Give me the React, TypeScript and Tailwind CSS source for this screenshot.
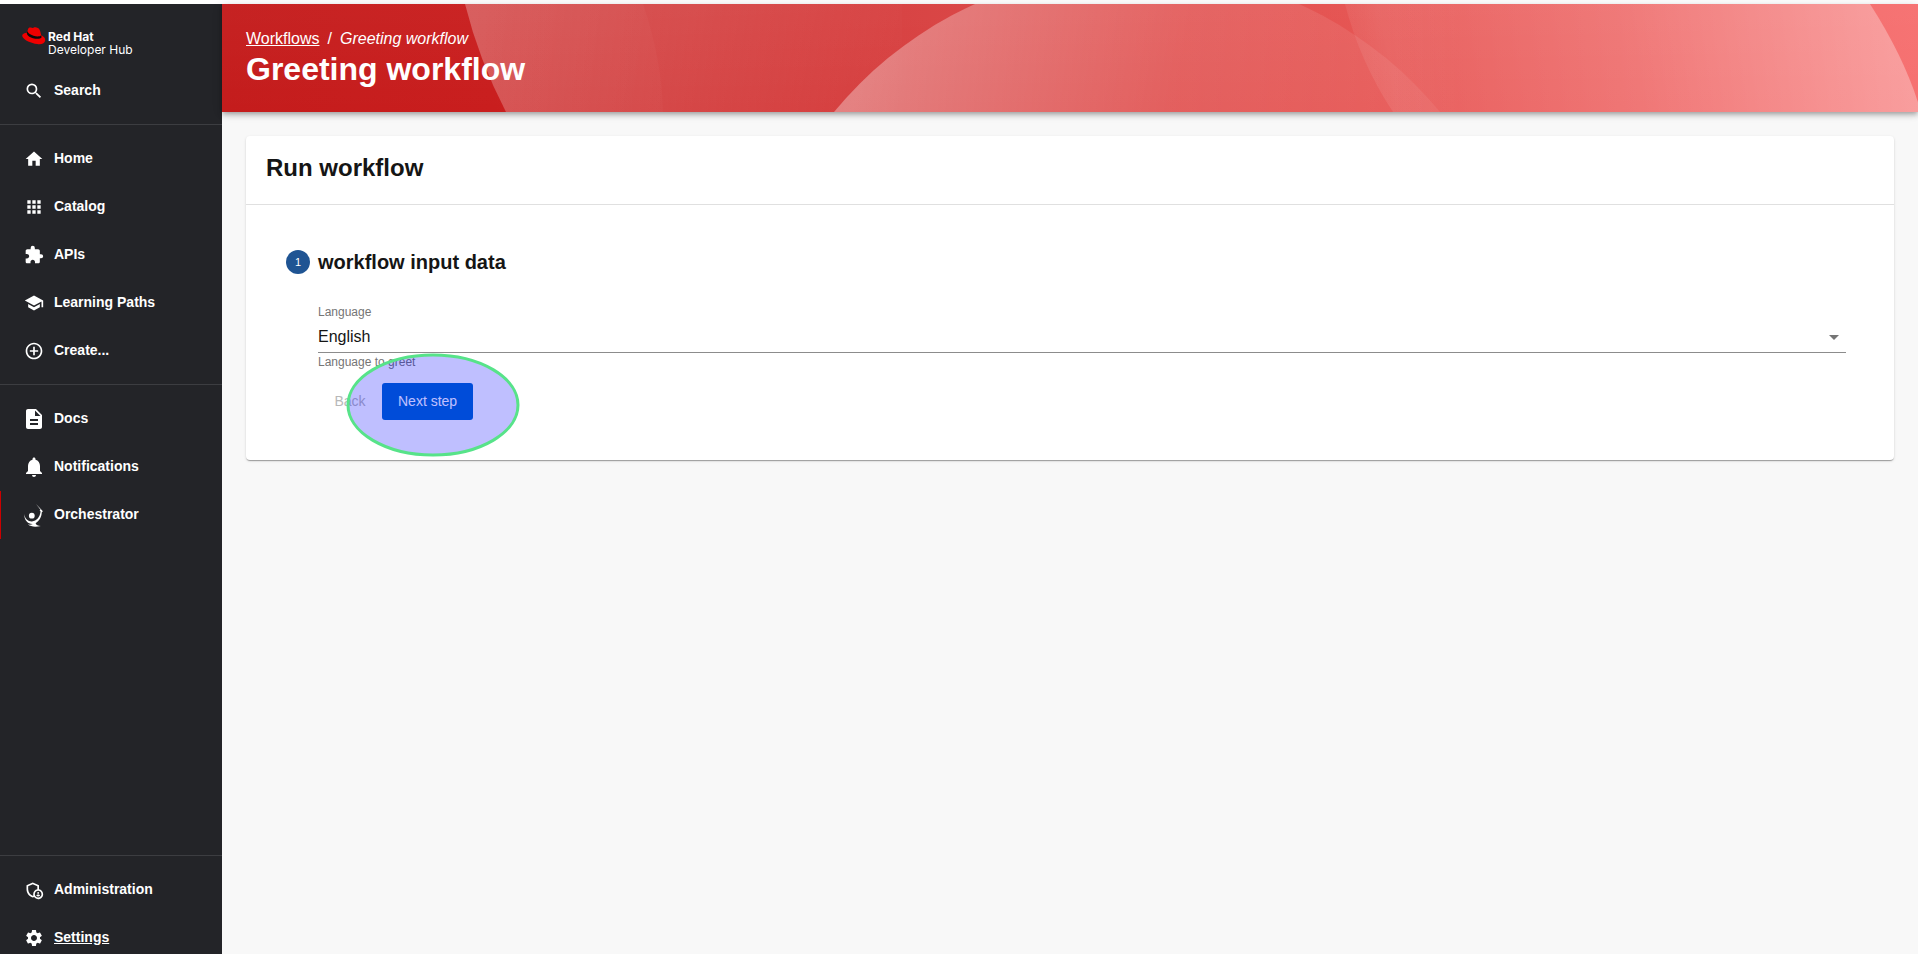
import type { ReactNode } from "react";
import {
  MdAddCircleOutline,
  MdApps,
  MdDescription,
  MdExtension,
  MdHome,
  MdNotifications,
  MdOutlineAdminPanelSettings,
  MdSchool,
  MdSearch,
  MdSettings,
} from "react-icons/md";

function OrchestratorIcon() {
  return (
    <svg viewBox="0 0 24 24" width="24" height="24" fill="currentColor" aria-hidden="true">
      <circle cx="9.8" cy="12.7" r="2.9" />
      <path d="M2.2 11C3 16 6.2 18.6 10 18.4C14.6 18 17.8 14.500 18.600 8.600L17.600 7.600L18.500 6.800L14 1L20.900 8.200L19.800 9.200C19.600 14.200 17.200 18 13.600 20.200C14.200 22 16 22.900 18.800 22.900C13.800 24.200 9 23.900 6 21.600C8.200 22 9.800 21.600 10.800 20.900C6 21.200 2.300 17.500 2.200 11Z" />
    </svg>
  );
}

function Logo() {
  return (
    <a href="#home" className="flex items-start gap-[3px] pl-[22px] pt-[22px] text-white">
      <svg viewBox="0 0 24 18" width="24" height="18" className="mt-px" aria-hidden="true">
        <path
          d="M6 2.200C6.400 .900 7.400 .300 8.800 .600C9.800 .900 10.700 1.200 11.400 .800C12.600 .100 14.300 .200 15.800 .900C17.200 1.600 17.900 2.800 18.300 4.500L19.200 8.300C21.800 9.400 23.400 11.200 23.200 13.300C22.900 16.600 19.200 17.700 15.200 17C9.200 16.200 2.200 13.200 .500 9.700C-.500 7.400 1.600 5.900 4.900 5.700Z"
          fill="#ee0000"
        />
        <path
          d="M4.900 5.700C4.600 8 7.400 10.200 11 11.200C14.400 12.200 18.600 12.100 19.600 10.300L19.200 8.300C18 9.800 14.600 9.700 11.500 8.800C8.300 7.900 5.700 6.100 5.500 4.100Z"
          fill="#0b0b0c"
        />
      </svg>
      <span className="flex flex-col pt-1 font-['Inter'] text-[12px] leading-[13px] -ml-px">
        <span className="font-bold">Red Hat</span>
        <span>Developer Hub</span>
      </span>
    </a>
  );
}

type ItemProps = { icon: ReactNode; label: string; active?: boolean; underlined?: boolean };

function SidebarItem({ icon, label, active, underlined }: ItemProps) {
  return (
    <a
      href={"#" + label}
      className={
        "flex h-12 shrink-0 items-center gap-2 border-l pl-[21px] text-[14px] font-bold text-white " +
        (active ? "border-[#c00]" : "border-transparent")
      }
    >
      <span className="flex w-6 justify-center">{icon}</span>
      <span className={"pb-[3px] leading-4 " + (underlined ? "underline" : "")}>{label}</span>
    </a>
  );
}

function Divider() {
  return <hr className="mb-[10px] mt-[9px] shrink-0 border-t border-[#3c3d41]" />;
}

function Sidebar() {
  return (
    <nav className="flex h-[calc(100vh+4px)] w-[222px] shrink-0 flex-col bg-[#232428]">
      <div className="h-[63px] shrink-0">
        <Logo />
      </div>
      <SidebarItem icon={<MdSearch size={20} />} label="Search" />
      <Divider />
      <SidebarItem icon={<MdHome size={20} />} label="Home" />
      <SidebarItem icon={<MdApps size={20} />} label="Catalog" />
      <SidebarItem icon={<MdExtension size={20} />} label="APIs" />
      <SidebarItem icon={<MdSchool size={20} />} label="Learning Paths" />
      <SidebarItem icon={<MdAddCircleOutline size={20} />} label="Create..." />
      <Divider />
      <SidebarItem icon={<MdDescription size={24} />} label="Docs" />
      <SidebarItem icon={<MdNotifications size={24} />} label="Notifications" />
      <SidebarItem icon={<OrchestratorIcon />} label="Orchestrator" active />
      <div className="grow" />
      <Divider />
      <SidebarItem icon={<MdOutlineAdminPanelSettings size={20} />} label="Administration" />
      <SidebarItem icon={<MdSettings size={20} />} label="Settings" underlined />
    </nav>
  );
}

function HeaderArt() {
  return (
    <svg
      className="absolute inset-0 h-full w-full"
      viewBox="0 0 1696 108"
      preserveAspectRatio="none"
      aria-hidden="true"
    >
      <defs>
        <linearGradient id="base" x1="0" x2="1" y1="0" y2="0">
          <stop offset="0" stopColor="#c41c1c" />
          <stop offset="0.160" stopColor="#c91e1e" />
          <stop offset="0.400" stopColor="#d73f3f" />
          <stop offset="0.650" stopColor="#e4504e" />
          <stop offset="1" stopColor="#f67070" />
        </linearGradient>
        <linearGradient id="shade" x1="0" x2="0" y1="0" y2="1">
          <stop offset="0" stopColor="#fff" stopOpacity="0.030" />
          <stop offset="1" stopColor="#fff" stopOpacity="0" />
        </linearGradient>
        <linearGradient id="arcA" gradientUnits="userSpaceOnUse" x1="240" y1="0" x2="680" y2="100">
          <stop offset="0" stopColor="#fff" stopOpacity="0.240" />
          <stop offset="0.500" stopColor="#fff" stopOpacity="0.130" />
          <stop offset="1" stopColor="#fff" stopOpacity="0" />
        </linearGradient>
        <linearGradient id="arcB" gradientUnits="userSpaceOnUse" x1="243" y1="0" x2="455" y2="50">
          <stop offset="0" stopColor="#fff" stopOpacity="0.050" />
          <stop offset="1" stopColor="#fff" stopOpacity="0.020" />
        </linearGradient>
        <linearGradient id="arcC" gradientUnits="userSpaceOnUse" x1="650" y1="20" x2="1200" y2="140">
          <stop offset="0" stopColor="#fff" stopOpacity="0.340" />
          <stop offset="0.550" stopColor="#fff" stopOpacity="0.120" />
          <stop offset="1" stopColor="#fff" stopOpacity="0.060" />
        </linearGradient>
        <linearGradient id="arcD" gradientUnits="userSpaceOnUse" x1="1150" y1="130" x2="1680" y2="20">
          <stop offset="0" stopColor="#fff" stopOpacity="0" />
          <stop offset="0.060" stopColor="#fff" stopOpacity="0.060" />
          <stop offset="0.500" stopColor="#fff" stopOpacity="0.140" />
          <stop offset="1" stopColor="#fff" stopOpacity="0.320" />
        </linearGradient>
        <linearGradient id="arcE" gradientUnits="userSpaceOnUse" x1="1120" y1="0" x2="1240" y2="0">
          <stop offset="0" stopColor="#fff" stopOpacity="0.070" />
          <stop offset="1" stopColor="#fff" stopOpacity="0" />
        </linearGradient>
      </defs>
      <rect width="1696" height="108" fill="url(#base)" />
      <rect width="1696" height="108" fill="url(#shade)" />
      <path d="M243 0Q257 56 284 108H680V0Z" fill="url(#arcA)" />
      <path d="M243 0Q257 56 284 108H441Q440 56 421 0Z" fill="url(#arcB)" />
      <circle cx="915" cy="357.500" r="392.500" fill="url(#arcC)" />
      <path d="M1123 0Q1138 58 1171 108H1699Q1684 56 1648 0Z" fill="url(#arcD)" />
      <path d="M1123 0Q1138 58 1171 108H1240V0Z" fill="url(#arcE)" />
    </svg>
  );
}

function Header() {
  return (
    <header className="relative z-10 shrink-0 shadow-[0_2px_4px_-1px_rgba(0,0,0,0.2),0_4px_5px_0_rgba(0,0,0,0.14),0_1px_10px_0_rgba(0,0,0,0.12)]">
      <HeaderArt />
      <div className="relative h-[108px] px-6 pt-[25px] text-white">
        <nav className="flex gap-2 text-[16px] leading-5" aria-label="Breadcrumb">
          <a href="#workflows" className="underline">
            Workflows
          </a>
          <span>/</span>
          <span className="italic">Greeting workflow</span>
        </nav>
        <h1 className="text-[32px] font-bold leading-10">Greeting workflow</h1>
      </div>
    </header>
  );
}

function StepForm() {
  return (
    <form className="px-10 pb-10 pt-[45px]" onSubmit={(e) => e.preventDefault()}>
      <div className="flex items-center gap-2">
        <svg viewBox="0 0 24 24" width="24" height="24" role="img" aria-label="Step 1">
          <circle cx="12" cy="12" r="12" fill="#1f5493" />
          <text x="12" y="16" textAnchor="middle" fontSize="11" fill="#fff">
            1
          </text>
        </svg>
        <h3 className="text-[20px] font-bold leading-[22px]">workflow input data</h3>
      </div>
      <div className="ml-8 mr-2 mt-[30px]">
        <label htmlFor="language" className="block text-[12px] leading-4 text-[#757575]">
          Language
        </label>
        <div className="relative">
          <select
            id="language"
            defaultValue="English"
            className="block h-[33px] w-full appearance-none border-b border-[#8c8c8c] bg-transparent pt-[2px] text-[16px] text-[#151515] outline-none"
          >
            <option>English</option>
            <option>Spanish</option>
          </select>
          <svg
            viewBox="0 0 24 24"
            width="24"
            height="24"
            fill="#757575"
            className="pointer-events-none absolute right-0 top-[5px]"
            aria-hidden="true"
          >
            <path d="M7 10l5 5 5-5z" />
          </svg>
        </div>
        <p className="pt-px text-[12px] leading-4 text-[#757575]">Language to greet</p>
      </div>
      <div className="ml-8 mt-[13px] flex text-[14px]">
        <button type="button" disabled className="w-16 text-center text-[#b8b8b8]">
          Back
        </button>
        <div className="relative">
          <button type="submit" className="h-[37px] rounded-[3px] bg-[#0066cc] px-4 text-white">
            Next step
          </button>
          <svg
            viewBox="0 0 174 104"
            width="174"
            height="104"
            className="pointer-events-none absolute left-[-36px] top-[-30px] max-w-none"
            aria-hidden="true"
          >
            <ellipse
              cx="87"
              cy="52"
              rx="85"
              ry="50"
              fill="#0000ff"
              fillOpacity="0.250"
              stroke="#57e389"
              strokeWidth="3"
            />
          </svg>
        </div>
      </div>
    </form>
  );
}

export default function App() {
  return (
    <div className="h-screen overflow-hidden bg-white pt-1 font-['Liberation_Sans',Arial,sans-serif] text-[#151515]">
      <div className="flex">
        <Sidebar />
        <div className="flex min-w-0 grow flex-col bg-[#f8f8f8]">
          <Header />
          <main className="p-6">
            <section className="rounded-[4px] bg-white shadow-[0_2px_1px_-1px_rgba(0,0,0,0.2),0_1px_1px_0_rgba(0,0,0,0.14),0_1px_3px_0_rgba(0,0,0,0.12)]">
              <h2 className="border-b border-[#e0e0e0] px-5 pb-5 pt-4 text-[24px] font-bold leading-8">
                Run workflow
              </h2>
              <StepForm />
            </section>
          </main>
        </div>
      </div>
    </div>
  );
}
